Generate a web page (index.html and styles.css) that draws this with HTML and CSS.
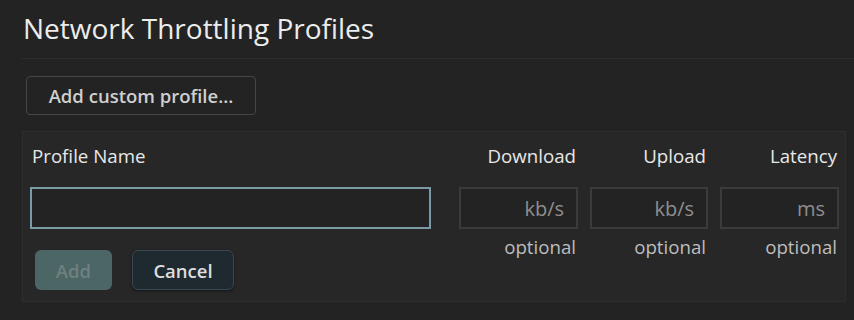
FILE: index.html
```html
<!DOCTYPE html>
<html lang="en">
<head>
    <meta charset="UTF-8">
    <title>Network Throttling Profiles</title>
    <link rel="stylesheet" href="styles.css">
</head>
<body>

<div class="page">
    <h1 class="page-title">Network Throttling Profiles</h1>

    <div class="toolbar">
        <button class="btn btn-outline">Add custom profile...</button>
    </div>

    <div class="editor">
        <div class="field-label name-label">Profile Name</div>
        <div class="field-label num-label">Download</div>
        <div class="field-label num-label">Upload</div>
        <div class="field-label num-label">Latency</div>

        <input type="text" class="text-input name-input">
        <input type="text" class="text-input num-input" placeholder="kb/s">
        <input type="text" class="text-input num-input" placeholder="kb/s">
        <input type="text" class="text-input num-input" placeholder="ms">

        <div class="actions">
            <button class="btn btn-primary" disabled>Add</button>
            <button class="btn btn-secondary">Cancel</button>
        </div>
        <div class="hint">optional</div>
        <div class="hint">optional</div>
        <div class="hint">optional</div>
    </div>
</div>

</body>
</html>
```

FILE: styles.css
```css
body {
    margin: 0;
    background-color: #232323;
    font-family: 'Open Sans', 'Noto Sans', sans-serif;
    color: #e0e0e0;
}
.page {
    padding-left: 22px;
    height: 320px;
    overflow: hidden;
}
.page-title {
    margin: 0;
    padding: 9px 0 0 1px;
    height: 59px;
    box-sizing: border-box;
    font-size: 28px;
    font-weight: 400;
    color: #ececec;
    border-bottom: 1px solid #2d2d2d;
}
.toolbar {
    padding: 17px 0 0 4px;
}
.btn {
    font-family: inherit;
    font-size: 18.5px;
    font-weight: 600;
    border-radius: 4px;
    cursor: pointer;
}
.btn-outline {
    height: 39px;
    width: 230px;
    background-color: #232323;
    border: 1px solid #464646;
    color: #cfcfcf;
}
.editor {
    margin: 16px 8px 0 0;
    height: 171px;
    box-sizing: border-box;
    background-color: #272727;
    border: 1px solid #2e2e2e;
    padding: 11px 7px 0 7px;
    display: grid;
    grid-template-columns: 417px 119px 118px 119px;
    grid-template-rows: 44px 42px auto;
    column-gap: 12px;
}
.field-label {
    font-size: 18.7px;
    line-height: 26px;
    color: #e8e8e8;
}
.name-label {
    padding-left: 2px;
}
.num-label {
    text-align: right;
    padding-right: 2px;
}
.text-input {
    box-sizing: border-box;
    height: 42px;
    width: 100%;
    margin: 0;
    background-color: #232323;
    border: 2px solid #3b3b3b;
    color: #e0e0e0;
    font-family: inherit;
    font-size: 20px;
    padding: 0 12px;
    outline: none;
}
.name-input {
    width: 401px;
    border-color: #7a9aa6;
}
.num-input {
    text-align: right;
}
.num-input::placeholder {
    color: #8e8e8e;
}
.hint {
    text-align: right;
    padding-right: 2px;
    font-size: 18.7px;
    line-height: 24px;
    padding-top: 6px;
    color: #bdbdbd;
}
.actions {
    display: flex;
    gap: 20px;
    padding: 21px 0 0 5px;
}
.btn-primary {
    width: 77px;
    height: 40px;
    background-color: #4b6665;
    border: none;
    color: #6f8080;
    border-radius: 6px;
}
.btn-secondary {
    width: 102px;
    height: 40px;
    background-color: #1e2a30;
    border: 1px solid #394850;
    color: #dedede;
    border-radius: 6px;
    box-shadow: 0 1px 3px rgba(0, 0, 0, 0.5);
}
```
